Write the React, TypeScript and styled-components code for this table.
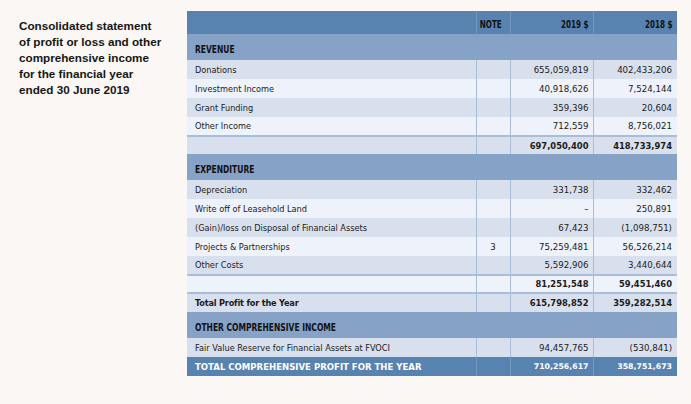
import React from "react";
import styled, { createGlobalStyle } from "styled-components";

const Global = createGlobalStyle`
  html, body { margin: 0; padding: 0; background: #fbf7f4; }
  body { font-family: "DejaVu Sans", "Liberation Sans", sans-serif; color: #1b1b1b; }
`;

const Page = styled.div`
  display: flex;
  align-items: flex-start;
  gap: 20px;
  padding: 11px 0 0 19px;
  width: 691px;
  height: 404px;
  box-sizing: border-box;
`;

const Title = styled.h1`
  margin: 7px 0 0 0;
  width: 148px;
  flex: none;
  font-family: "Liberation Sans", Arial, sans-serif;
  font-size: 11.7px;
  line-height: 16px;
  font-weight: 700;
  color: #161616;
  white-space: nowrap;
`;

const Table = styled.table`
  border-collapse: collapse;
  table-layout: fixed;
  width: 490px;
  flex: none;
`;

type Tone = "dark" | "light";

const Row = styled.tr<{ $tone?: Tone; $ruleTop?: boolean }>`
  background: ${(p) => (p.$tone === "light" ? "#eef2fa" : "#d9e0ed")};
  ${(p) => (p.$ruleTop ? "border-top: 2px solid #a9bddb;" : "")}
`;

const Cell = styled.td<{ $h?: number; $bold?: boolean }>`
  height: ${(p) => p.$h ?? 19}px;
  padding: 0 8px;
  text-align: left;
  font-size: 8.2px;
  font-weight: ${(p) => (p.$bold ? 700 : 400)};
  letter-spacing: ${(p) => (p.$bold ? "-0.2px" : "0")};
  white-space: nowrap;
  box-sizing: border-box;
`;

const NumCell = styled.td<{ $bold?: boolean; $last?: boolean }>`
  padding: 0 ${(p) => (p.$last ? 5 : 4)}px 0 0;
  text-align: right;
  font-size: ${(p) => (p.$bold ? 8.4 : 8.65)}px;
  font-weight: ${(p) => (p.$bold ? 700 : 400)};
  border-left: 1px solid #a9bddb;
  white-space: nowrap;
`;

const NoteCell = styled.td`
  text-align: center;
  padding: 0;
  font-size: 8.65px;
  border-left: 1px solid #a9bddb;
`;

const HeadRow = styled.tr`
  background: #5882b0;
`;

const HeadCell = styled.th<{ $align?: "center" | "right"; $last?: boolean }>`
  height: 23px;
  padding: 0 ${(p) => (p.$last ? 5 : 4)}px 0 0;
  text-align: ${(p) => p.$align ?? "right"};
  border-left: 1px solid #7196c0;
  &:first-child { border-left: none; }
`;

const Condensed = styled.span<{ $origin?: "left" | "right" | "center"; $size?: number }>`
  display: inline-block;
  font-family: "DejaVu Sans Condensed", "DejaVu Sans", sans-serif;
  font-stretch: condensed;
  font-weight: 700;
  font-size: ${(p) => p.$size ?? 10.5}px;
  color: #111;
  transform: scaleX(0.8);
  transform-origin: ${(p) => p.$origin ?? "left"} center;
  white-space: nowrap;
`;

const SectionRow = styled.tr`
  background: #86a2c6;
`;

const SectionCell = styled.td`
  height: 26px;
  padding: 0 8px;
`;

const GrandRow = styled.tr`
  background: #5882b0;
  color: #fff;
`;

const GrandCell = styled.td`
  height: 19px;
  padding: 0 8px;
  text-align: left;
  font-weight: 700;
  font-size: 8.55px;
  white-space: nowrap;
`;

const GrandNum = styled.td<{ $last?: boolean }>`
  padding: 0 ${(p) => (p.$last ? 5 : 4)}px 0 0;
  text-align: right;
  font-weight: 700;
  font-size: 7.8px;
  border-left: 1px solid #7599c2;
`;

type Line = { label: string; note?: string; a: string; b: string };

const revenue: Line[] = [
  { label: "Donations", a: "655,059,819", b: "402,433,206" },
  { label: "Investment Income", a: "40,918,626", b: "7,524,144" },
  { label: "Grant Funding", a: "359,396", b: "20,604" },
  { label: "Other Income", a: "712,559", b: "8,756,021" },
];

const expenditure: Line[] = [
  { label: "Depreciation", a: "331,738", b: "332,462" },
  { label: "Write off of Leasehold Land", a: "–", b: "250,891" },
  { label: "(Gain)/loss on Disposal of Financial Assets", a: "67,423", b: "(1,098,751)" },
  { label: "Projects & Partnerships", note: "3", a: "75,259,481", b: "56,526,214" },
  { label: "Other Costs", a: "5,592,906", b: "3,440,644" },
];

const tone = (i: number): Tone => (i % 2 === 0 ? "dark" : "light");

const DataRow: React.FC<{ line: Line; t: Tone }> = ({ line, t }) => (
  <Row $tone={t}>
    <Cell>{line.label}</Cell>
    <NoteCell>{line.note ?? ""}</NoteCell>
    <NumCell>{line.a}</NumCell>
    <NumCell $last>{line.b}</NumCell>
  </Row>
);

const Section: React.FC<{ title: string }> = ({ title }) => (
  <SectionRow>
    <SectionCell colSpan={4}>
      <Condensed>{title}</Condensed>
    </SectionCell>
  </SectionRow>
);

export default function App() {
  return (
    <>
      <Global />
      <Page>
        <Title>
          Consolidated statement
          <br />
          of profit or loss and other
          <br />
          comprehensive income
          <br />
          for the financial year
          <br />
          ended 30 June 2019
        </Title>
        <Table>
          <colgroup>
            <col style={{ width: 289 }} />
            <col style={{ width: 34 }} />
            <col style={{ width: 83 }} />
            <col style={{ width: 84 }} />
          </colgroup>
          <thead>
            <HeadRow>
              <HeadCell />
              <HeadCell $align="center">
                <Condensed $origin="center" $size={10}>NOTE</Condensed>
              </HeadCell>
              <HeadCell>
                <Condensed $origin="right" $size={10}>2019 $</Condensed>
              </HeadCell>
              <HeadCell $last>
                <Condensed $origin="right" $size={10}>2018 $</Condensed>
              </HeadCell>
            </HeadRow>
          </thead>
          <tbody>
            <Section title="REVENUE" />
            {revenue.map((l, i) => (
              <DataRow key={l.label} line={l} t={tone(i)} />
            ))}
            <Row $tone="dark" $ruleTop>
              <Cell $h={18} />
              <NoteCell />
              <NumCell $bold>697,050,400</NumCell>
              <NumCell $bold $last>418,733,974</NumCell>
            </Row>
            <Section title="EXPENDITURE" />
            {expenditure.map((l, i) => (
              <DataRow key={l.label} line={l} t={tone(i)} />
            ))}
            <Row $tone="light" $ruleTop>
              <Cell $h={18} />
              <NoteCell />
              <NumCell $bold>81,251,548</NumCell>
              <NumCell $bold $last>59,451,460</NumCell>
            </Row>
            <Row $tone="dark" $ruleTop>
              <Cell $bold>Total Profit for the Year</Cell>
              <NoteCell />
              <NumCell $bold>615,798,852</NumCell>
              <NumCell $bold $last>359,282,514</NumCell>
            </Row>
            <Section title="OTHER COMPREHENSIVE INCOME" />
            <DataRow
              line={{ label: "Fair Value Reserve for Financial Assets at FVOCI", a: "94,457,765", b: "(530,841)" }}
              t="dark"
            />
            <GrandRow>
              <GrandCell>TOTAL COMPREHENSIVE PROFIT FOR THE YEAR</GrandCell>
              <GrandNum />
              <GrandNum>710,256,617</GrandNum>
              <GrandNum $last>358,751,673</GrandNum>
            </GrandRow>
          </tbody>
        </Table>
      </Page>
    </>
  );
}
